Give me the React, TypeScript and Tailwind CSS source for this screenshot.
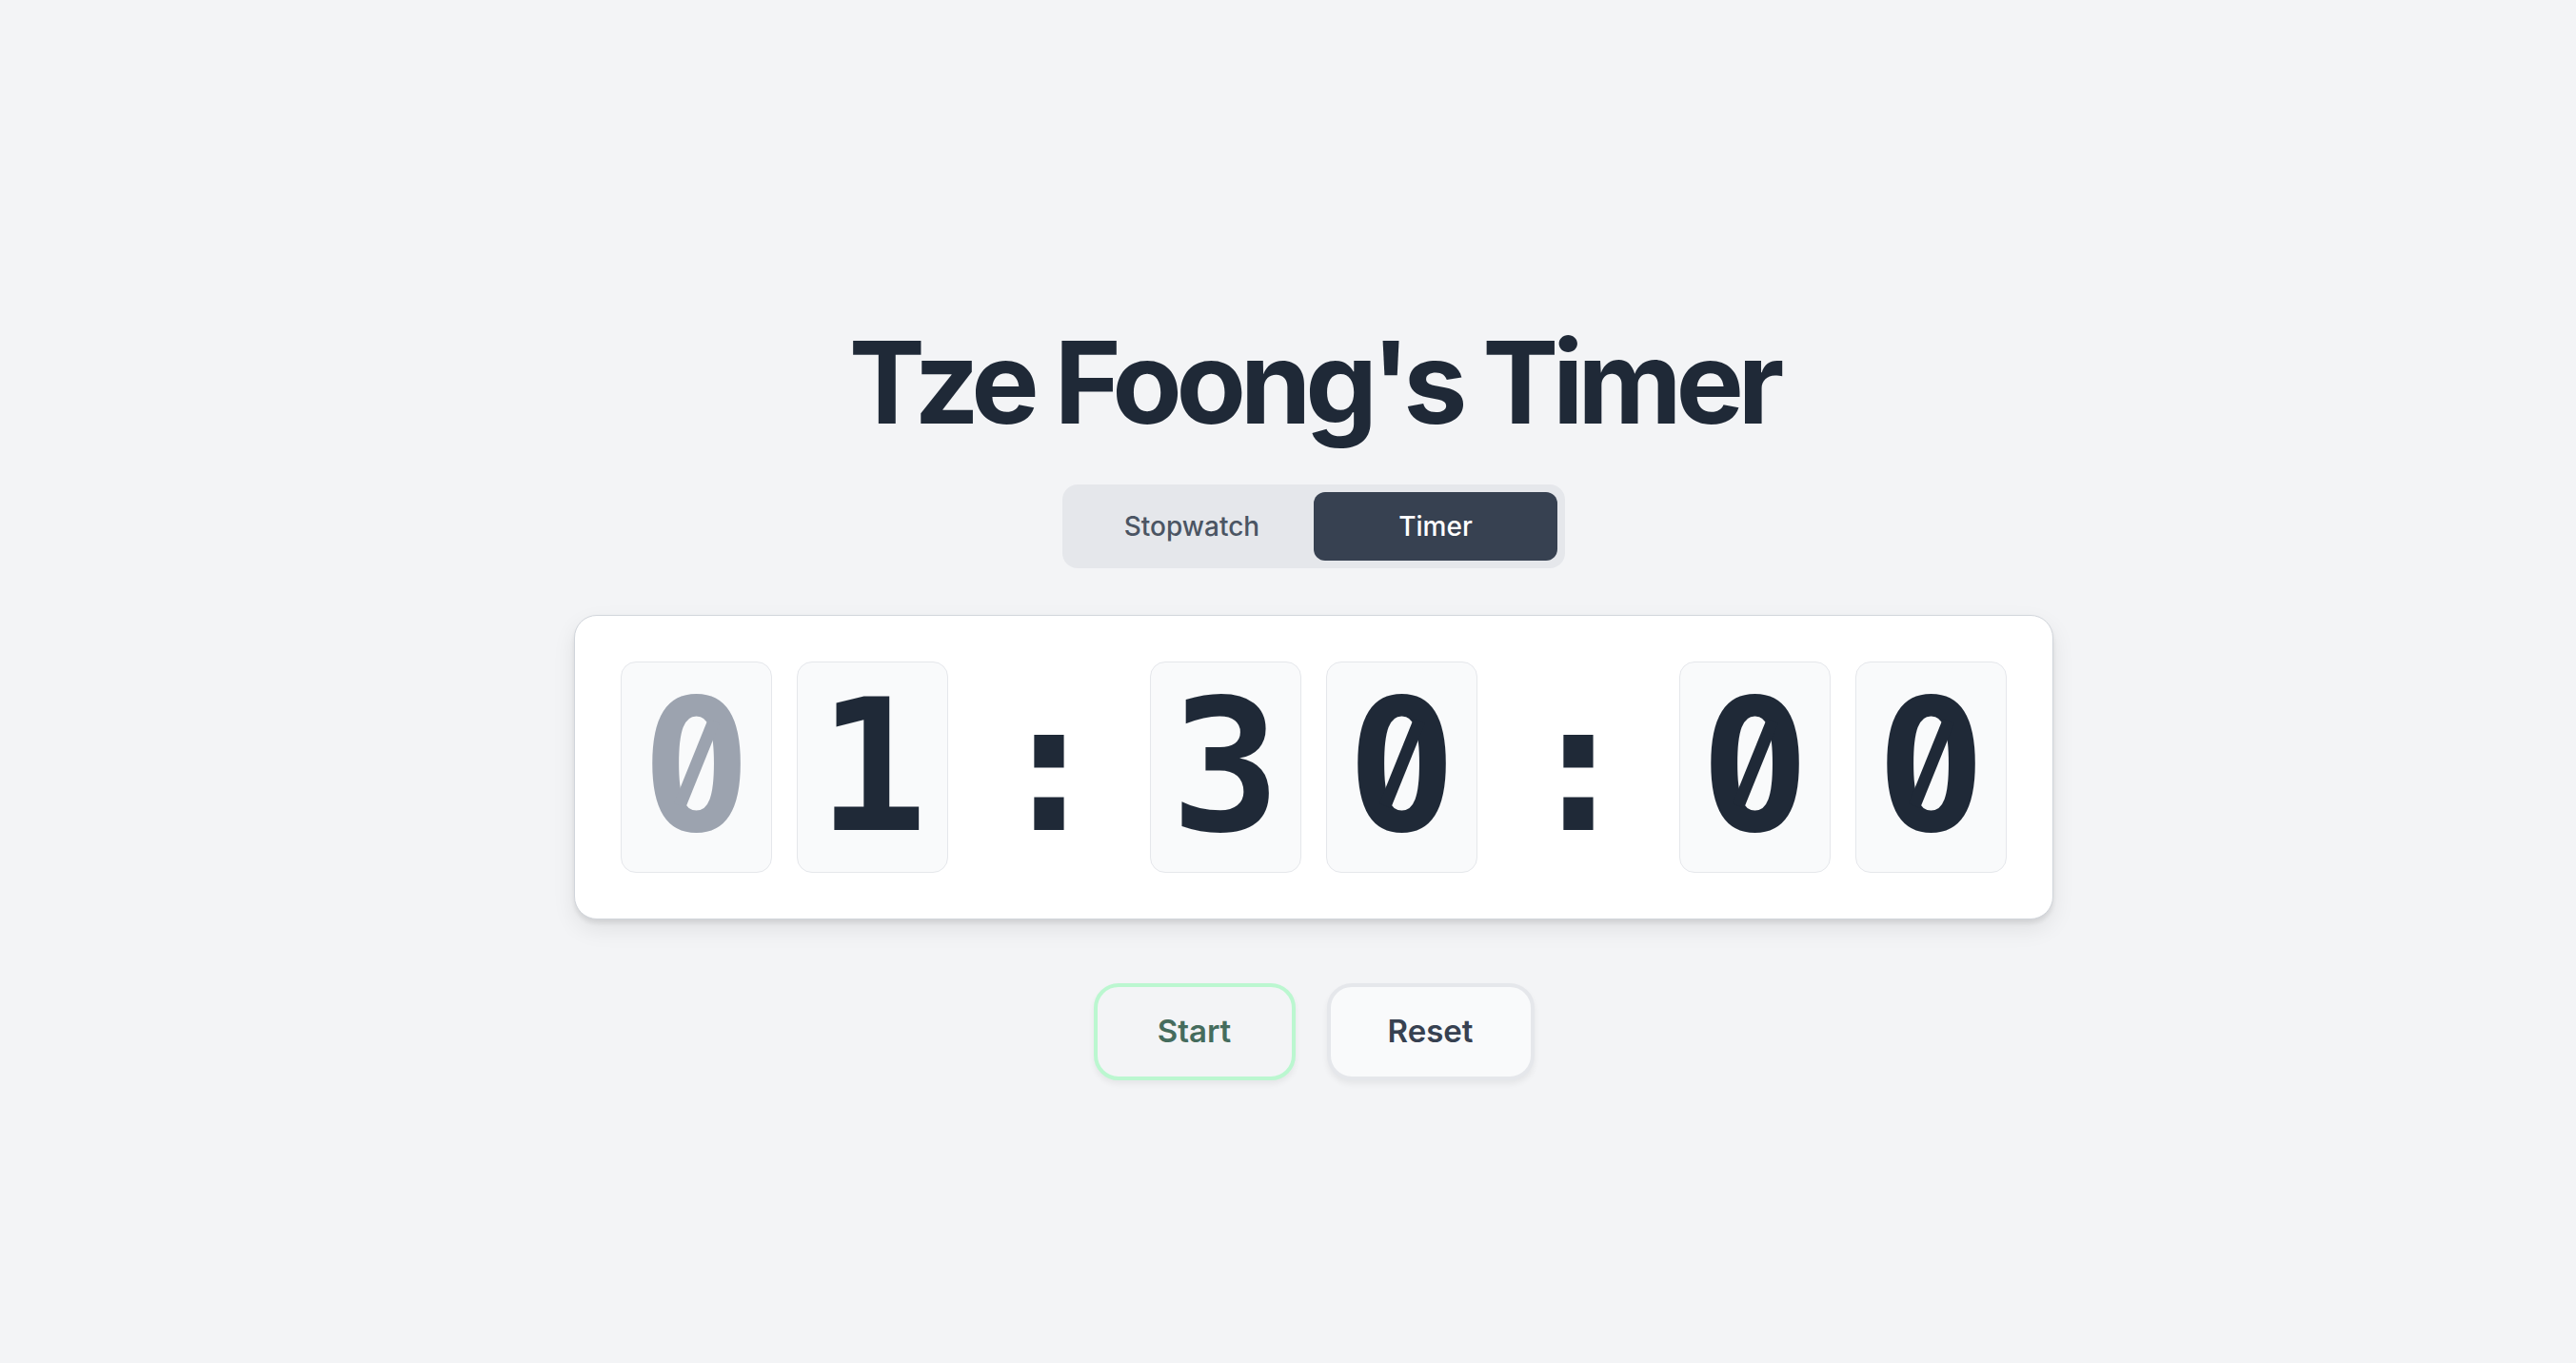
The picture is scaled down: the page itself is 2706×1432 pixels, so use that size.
import React from "react";

const sans = { fontFamily: "Inter, 'Noto Sans', sans-serif" };
const mono = { fontFamily: "'DejaVu Sans Mono', 'Liberation Mono', monospace" };

// Zero rendered with a slash through the counter instead of the font's dot.
function SlashedZero() {
  return (
    <span className="relative inline-block">
      0
      <span className="absolute left-1/2 top-[92px] w-[30px] h-[46px] -translate-x-1/2 -translate-y-1/2 rounded-full bg-[#f9fafb]" />
      <span className="absolute left-1/2 top-[92px] w-[13px] h-[96px] -translate-x-1/2 -translate-y-1/2 rotate-[22deg] bg-current" />
    </span>
  );
}

function Digit({ value, dim }: { value: string; dim?: boolean }) {
  return (
    <div className="w-[159px] h-[222px] rounded-[16px] border border-[#e5e7eb] bg-[#f9fafb] flex items-center justify-center">
      <span
        style={mono}
        className={`text-[192px] leading-none font-bold ${dim ? "text-[#9ca3af]" : "text-[#1f2937]"}`}
      >
        {value === "0" ? <SlashedZero /> : value}
      </span>
    </div>
  );
}

function Pair({ a, b, dimFirst }: { a: string; b: string; dimFirst?: boolean }) {
  return (
    <div className="flex gap-[26px]">
      <Digit value={a} dim={dimFirst} />
      <Digit value={b} />
    </div>
  );
}

function Colon() {
  return (
    <div className="w-[212px] h-[222px] flex items-center justify-center">
      <span style={mono} className="text-[192px] leading-none font-bold text-[#1f2937]">
        :
      </span>
    </div>
  );
}

export default function App() {
  return (
    <div style={sans} className="min-h-screen bg-[#f3f4f6] flex flex-col items-center pt-[342px] pl-[54px]">
      <h1 className="text-[120px] leading-none font-bold tracking-[-6.3px] text-[#1f2937]">
        Tze Foong's Timer
      </h1>

      <div className="mt-[47px] flex p-2 rounded-[16px] bg-[#e5e7eb]">
        <button className="w-[256px] h-[72px] rounded-[12px] text-[28px] font-medium text-[#4b5563]">
          Stopwatch
        </button>
        <button className="w-[256px] h-[72px] rounded-[12px] text-[28px] font-medium text-white bg-[#374151]">
          Timer
        </button>
      </div>

      <div className="mt-[49px] flex items-center px-12 py-12 bg-white border border-[#d1d5db] rounded-[24px] shadow-[0_4px_4px_rgba(0,0,0,0.08),0_10px_24px_rgba(0,0,0,0.08)]">
        <Pair a="0" b="1" dimFirst />
        <Colon />
        <Pair a="3" b="0" />
        <Colon />
        <Pair a="0" b="0" />
      </div>

      <div className="mt-[67px] flex gap-[33px]">
        <button className="w-[212px] h-[102px] rounded-[26px] border-4 border-[#bbf7d0] bg-[#f3f4f6] text-[33px] font-semibold text-[#456c5d] shadow-[0_4px_6px_rgba(0,0,0,0.06)]">
          Start
        </button>
        <button className="w-[218px] h-[102px] rounded-[26px] border-4 border-[#e5e7eb] bg-[#f9fafb] text-[33px] font-semibold text-[#374151] shadow-[0_4px_6px_rgba(0,0,0,0.06)]">
          Reset
        </button>
      </div>
    </div>
  );
}
